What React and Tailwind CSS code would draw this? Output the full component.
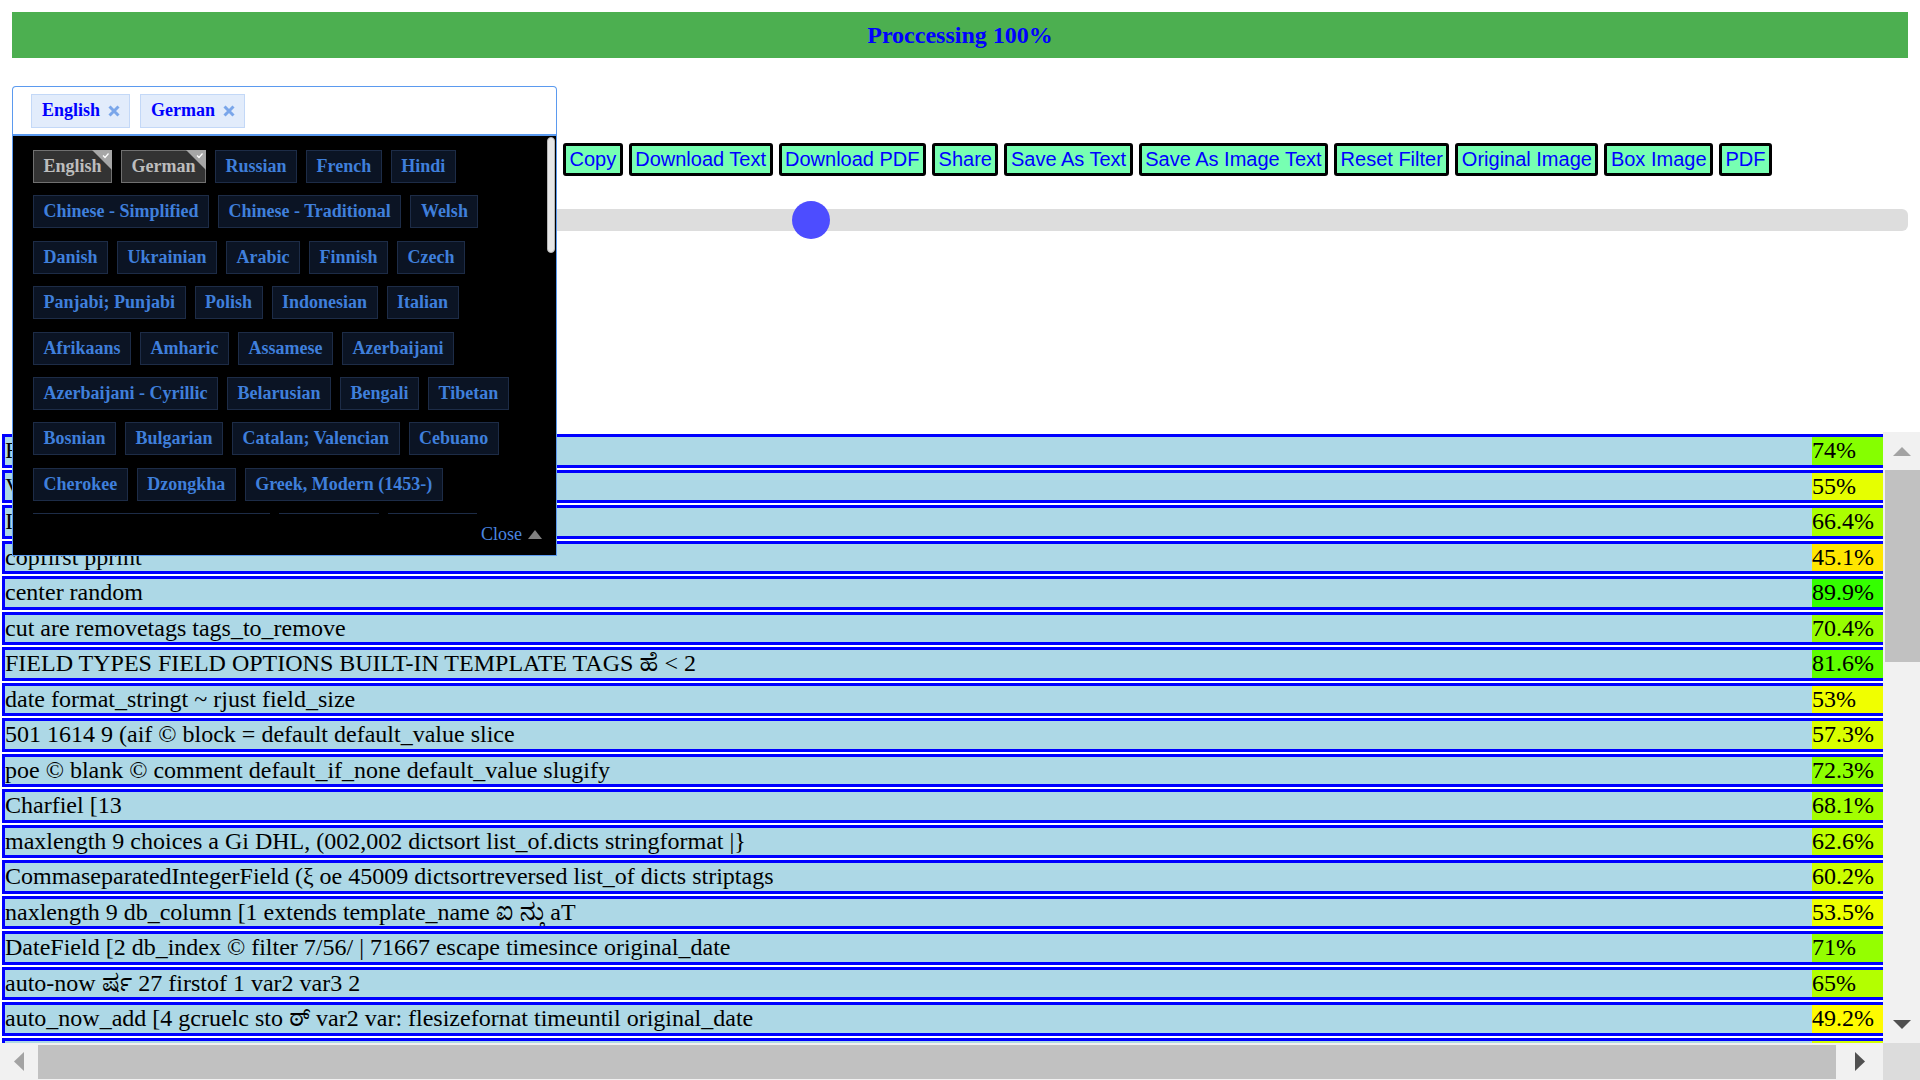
import React from 'react'

const LANGS = [
  'English', 'German', 'Russian', 'French', 'Hindi',
  'Chinese - Simplified', 'Chinese - Traditional', 'Welsh',
  'Danish', 'Ukrainian', 'Arabic', 'Finnish', 'Czech',
  'Panjabi; Punjabi', 'Polish', 'Indonesian', 'Italian',
  'Afrikaans', 'Amharic', 'Assamese', 'Azerbaijani',
  'Azerbaijani - Cyrillic', 'Belarusian', 'Bengali', 'Tibetan',
  'Bosnian', 'Bulgarian', 'Catalan; Valencian', 'Cebuano',
  'Cherokee', 'Dzongkha', 'Greek, Modern (1453-)',
  'English, Middle (1100-1500)', 'Esperanto', 'Estonian',
  'Basque', 'Persian', 'Frankish', 'Irish', 'Galician', 'Gujarati',
]
const SELECTED = ['English', 'German']

const BUTTONS = [
  'Copy', 'Download Text', 'Download PDF', 'Share', 'Save As Text',
  'Save As Image Text', 'Reset Filter', 'Original Image', 'Box Image', 'PDF',
]

const ROWS = [
  ['Fields options and template filters', 74],
  ['Variables', 55],
  ['IntegerField', 66.4],
  ['copfirst pprint', 45.1],
  ['center random', 89.9],
  ['cut are removetags tags_to_remove', 70.4],
  ['FIELD TYPES FIELD OPTIONS BUILT-IN TEMPLATE TAGS ಹೆ < 2', 81.6],
  ['date format_stringt ~ rjust field_size', 53],
  ['501 1614 9 (aif © block = default default_value slice', 57.3],
  ['poe © blank © comment default_if_none default_value slugify', 72.3],
  ['Charfiel [13', 68.1],
  ['maxlength 9 choices a Gi DHL, (002,002 dictsort list_of.dicts stringformat |}', 62.6],
  ['CommaseparatedIntegerField (ξ oe 45009 dictsortreversed list_of dicts striptags', 60.2],
  ['naxlength 9 db_column [1 extends template_name ಐ ನ್ತು aT', 53.5],
  ['DateField [2 db_index © filter 7/56/ | 71667 escape timesince original_date', 71],
  ['auto-now ರ್ಷ 27 firstof 1 var2 var3 2', 65],
  ['auto_now_add [4 gcruelc sto ಠ್ var2 var: flesizefornat timeuntil original_date', 49.2],
  ['DecimalField [5 editable trans', 58.7],
  ['max_digits 9 error_messages', 61.2],
]

function XMark() {
  return (
    <svg width="12" height="12" viewBox="0 0 12 12">
      <path d="M1.5 1.5L10.5 10.5M10.5 1.5L1.5 10.5" stroke="#7aa6ea" strokeWidth="3" />
    </svg>
  )
}

function Tri({ dir, color }) {
  const pts = {
    up: '0,9 9,0 18,9',
    down: '0,0 18,0 9,9',
  }
  if (dir === 'left' || dir === 'right') {
    return (
      <svg width="10" height="19" viewBox="0 0 10 19">
        <polygon points={dir === 'left' ? '10,0 10,19 0,9.5' : '0,0 0,19 10,9.5'} fill={color} />
      </svg>
    )
  }
  return (
    <svg width="18" height="9" viewBox="0 0 18 9">
      <polygon points={pts[dir]} fill={color} />
    </svg>
  )
}

function LangChip({ name }) {
  const on = SELECTED.includes(name)
  return (
    <span
      className={
        'relative h-[33px] flex items-center px-[9.5px] border text-[18px] font-bold whitespace-nowrap ' +
        (on
          ? 'bg-[#333333] border-[#707070] text-[#bdbdbd]'
          : 'bg-[#0b1424] border-[#1d2c47] text-[#3f7fdb]')
      }
    >
      {name}
      {on && (
        <svg className="absolute -top-px -right-px" width="20" height="20" viewBox="0 0 20 20">
          <polygon points="0,0 20,0 20,20" fill="#a6a6a6" />
          <path d="M11 5.5L13 7.5L16.5 3.5" stroke="#ffffff" strokeWidth="1.2" fill="none" />
        </svg>
      )}
    </span>
  )
}

export default function App() {
  return (
    <div className="w-[1920px] h-[1080px] overflow-hidden bg-white font-['Liberation_Serif','Noto_Serif_Kannada','Noto_Sans_Kannada',serif]">
      <div className="mx-3 mt-3 h-[46px] bg-[#4caf50] flex items-center justify-center">
        <h2 className="text-[24px] font-bold text-[#0000ff] leading-none">Proccessing 100%</h2>
      </div>

      <div className="flex items-start mt-[28px] ml-3">
        <div className="relative w-[545px] shrink-0 z-10">
          <div className="h-[50px] border border-b-2 border-[#5b9aef] rounded-t-[4px] bg-white flex items-center gap-[10px] pl-[18px]">
            {SELECTED.map(s => (
              <span key={s} className="h-[34px] flex items-center gap-[8px] pl-[10px] pr-[9px] bg-[#e2ecfb] border border-[#c3d8f7] text-[#0000ff] font-bold text-[18px]">
                {s} <XMark />
              </span>
            ))}
          </div>

          <div className="absolute left-0 top-full w-full h-[420px] bg-black border border-t-0 border-[#5b9aef] flex flex-col">
            <div className="flex h-[378px] shrink-0">
              <div className="flex-1 overflow-hidden pl-[20px] pr-[12px] pt-[14px] flex flex-wrap content-start gap-x-[9px] gap-y-[12.4px]">
                {LANGS.map(l => <LangChip key={l} name={l} />)}
              </div>
              <div className="w-[9px] pt-px">
                <div className="h-[116px] w-[8px] rounded-full bg-[#e6e6e6] border border-[#b5b5b5]" />
              </div>
            </div>
            <div className="flex-1 flex items-center justify-end gap-[6px] pr-[14px] text-[18px] text-[#4a86e0]">
              Close
              <svg width="14" height="9" viewBox="0 0 14 9">
                <polygon points="0,9 7,0 14,9" fill="#808080" />
              </svg>
            </div>
          </div>
        </div>

        <div className="ml-[6px] mt-[57px] flex gap-[6px] font-['Liberation_Sans',Arial,sans-serif]">
          {BUTTONS.map(b => (
            <button key={b} className="border-[3px] border-black rounded-[3px] bg-[#77ffb2] text-[#0000ff] text-[20px] leading-[23px] px-[3.5px] py-[2px] whitespace-nowrap">
              {b}
            </button>
          ))}
        </div>
      </div>

      <div className="mx-3 mt-[33px] h-[22px] flex">
        <input
          type="range"
          min="0"
          max="100"
          defaultValue="42"
          className="w-full h-[22px] appearance-none bg-[#dddddd] rounded-[6px] outline-none [&::-webkit-slider-thumb]:appearance-none [&::-webkit-slider-thumb]:w-[38px] [&::-webkit-slider-thumb]:h-[38px] [&::-webkit-slider-thumb]:rounded-full [&::-webkit-slider-thumb]:bg-[#4d4dff]"
        />
      </div>

      <div className="mt-[201px] h-[648px] flex flex-col">
        <div className="flex flex-1 min-h-0">
          <div className="flex-1 min-w-0 overflow-hidden bg-white pt-[2px] pl-[2px] flex flex-col gap-[2px]">
            {ROWS.map(([t, p], i) => (
              <div key={i} className="shrink-0 w-[1990px] flex border-[3px] border-[#0000ff] bg-[#add8e6] text-[24px] leading-[27.5px] text-black whitespace-nowrap">
                <div className="w-[1807px] shrink-0 overflow-hidden">{t}</div>
                <div className="w-[120px] shrink-0" style={{ backgroundColor: `hsl(${p * 1.2}, 100%, 50%)` }}>{p}%</div>
              </div>
            ))}
          </div>
          <div className="w-[37px] shrink-0 bg-[#f1f1f1] flex flex-col">
            <div className="h-[38px] flex items-center justify-center"><Tri dir="up" color="#a3a3a3" /></div>
            <div className="ml-[2px] h-[192px] bg-[#c1c1c1]" />
            <div className="flex-1" />
            <div className="h-[38px] flex items-center justify-center"><Tri dir="down" color="#505050" /></div>
          </div>
        </div>
        <div className="h-[37px] flex shrink-0">
          <div className="flex-1 bg-[#f1f1f1] flex">
            <div className="w-[38px] flex items-center justify-center"><Tri dir="left" color="#a3a3a3" /></div>
            <div className="mt-[2px] h-[34px] w-[1798px] bg-[#c1c1c1]" />
            <div className="flex-1 flex items-center justify-center"><Tri dir="right" color="#505050" /></div>
          </div>
          <div className="w-[37px] bg-[#dcdcdc]" />
        </div>
      </div>
    </div>
  )
}
